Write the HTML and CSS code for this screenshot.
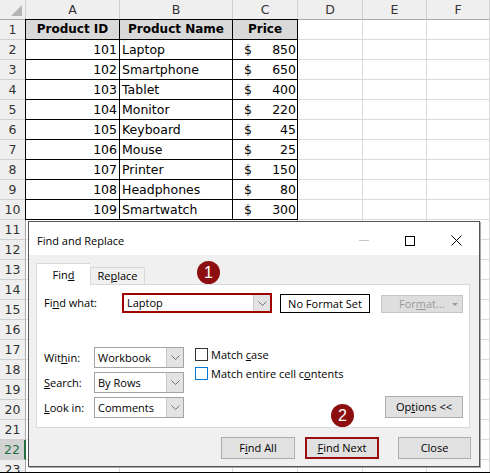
FILE: index.html
```html
<!DOCTYPE html>
<html>
<head>
<meta charset="utf-8">
<title>Find and Replace</title>
<link rel="stylesheet" href="styles.css">
</head>
<body>
<div class="screen">
  <div class="sheet">
    <div class="ch corner"><svg width="26" height="20" viewBox="0 0 26 20"><polygon points="22,5 22,16 11,16" fill="#b4b4b4"/></svg></div>
    <div class="ch">A</div><div class="ch">B</div><div class="ch">C</div><div class="ch">D</div><div class="ch">E</div><div class="ch">F</div>

    <div class="rh">1</div><div class="c tb hd first">Product ID</div><div class="c tb hd">Product Name</div><div class="c tb hd">Price</div><div class="c"></div><div class="c"></div><div class="c"></div>
    <div class="rh">2</div><div class="c tb num first">101</div><div class="c tb txt">Laptop</div><div class="c tb cur"><span>$</span><span>850</span></div><div class="c"></div><div class="c"></div><div class="c"></div>
    <div class="rh">3</div><div class="c tb num first">102</div><div class="c tb txt">Smartphone</div><div class="c tb cur"><span>$</span><span>650</span></div><div class="c"></div><div class="c"></div><div class="c"></div>
    <div class="rh">4</div><div class="c tb num first">103</div><div class="c tb txt">Tablet</div><div class="c tb cur"><span>$</span><span>400</span></div><div class="c"></div><div class="c"></div><div class="c"></div>
    <div class="rh">5</div><div class="c tb num first">104</div><div class="c tb txt">Monitor</div><div class="c tb cur"><span>$</span><span>220</span></div><div class="c"></div><div class="c"></div><div class="c"></div>
    <div class="rh">6</div><div class="c tb num first">105</div><div class="c tb txt">Keyboard</div><div class="c tb cur"><span>$</span><span>45</span></div><div class="c"></div><div class="c"></div><div class="c"></div>
    <div class="rh">7</div><div class="c tb num first">106</div><div class="c tb txt">Mouse</div><div class="c tb cur"><span>$</span><span>25</span></div><div class="c"></div><div class="c"></div><div class="c"></div>
    <div class="rh">8</div><div class="c tb num first">107</div><div class="c tb txt">Printer</div><div class="c tb cur"><span>$</span><span>150</span></div><div class="c"></div><div class="c"></div><div class="c"></div>
    <div class="rh">9</div><div class="c tb num first">108</div><div class="c tb txt">Headphones</div><div class="c tb cur"><span>$</span><span>80</span></div><div class="c"></div><div class="c"></div><div class="c"></div>
    <div class="rh">10</div><div class="c tb num first">109</div><div class="c tb txt">Smartwatch</div><div class="c tb cur"><span>$</span><span>300</span></div><div class="c"></div><div class="c"></div><div class="c"></div>

    <div class="rh">11</div><div class="c"></div><div class="c"></div><div class="c"></div><div class="c"></div><div class="c"></div><div class="c"></div>
    <div class="rh">12</div><div class="c"></div><div class="c"></div><div class="c"></div><div class="c"></div><div class="c"></div><div class="c"></div>
    <div class="rh">13</div><div class="c"></div><div class="c"></div><div class="c"></div><div class="c"></div><div class="c"></div><div class="c"></div>
    <div class="rh">14</div><div class="c"></div><div class="c"></div><div class="c"></div><div class="c"></div><div class="c"></div><div class="c"></div>
    <div class="rh">15</div><div class="c"></div><div class="c"></div><div class="c"></div><div class="c"></div><div class="c"></div><div class="c"></div>
    <div class="rh">16</div><div class="c"></div><div class="c"></div><div class="c"></div><div class="c"></div><div class="c"></div><div class="c"></div>
    <div class="rh">17</div><div class="c"></div><div class="c"></div><div class="c"></div><div class="c"></div><div class="c"></div><div class="c"></div>
    <div class="rh">18</div><div class="c"></div><div class="c"></div><div class="c"></div><div class="c"></div><div class="c"></div><div class="c"></div>
    <div class="rh">19</div><div class="c"></div><div class="c"></div><div class="c"></div><div class="c"></div><div class="c"></div><div class="c"></div>
    <div class="rh">20</div><div class="c"></div><div class="c"></div><div class="c"></div><div class="c"></div><div class="c"></div><div class="c"></div>
    <div class="rh">21</div><div class="c"></div><div class="c"></div><div class="c"></div><div class="c"></div><div class="c"></div><div class="c"></div>
    <div class="rh active">22</div><div class="c"></div><div class="c"></div><div class="c"></div><div class="c"></div><div class="c"></div><div class="c"></div>
    <div class="rh">23</div><div class="c"></div><div class="c"></div><div class="c"></div><div class="c"></div><div class="c"></div><div class="c"></div>
  </div>

  <div class="dialog">
    <div class="titlebar">
      <span class="title">Find and Replace</span>
      <div class="wctl">
        <div class="slot"><span class="min"></span></div>
        <div class="slot"><span class="max"></span></div>
        <div class="slot"><svg width="11" height="11" viewBox="0 0 11 11"><path d="M0.5 0.5 L10.5 10.5 M10.5 0.5 L0.5 10.5" stroke="#000" stroke-width="1" fill="none"/></svg></div>
      </div>
    </div>
    <div class="dbody">
      <div class="tabs">
        <div class="tab active">Fin<u>d</u></div>
        <div class="tab">Re<u>p</u>lace</div>
      </div>
      <div class="panel">
        <div class="findrow">
          <span class="lbl-fw">Fi<u>n</u>d what:</span>
          <div class="combo">
            <span class="val">Laptop</span>
            <span class="arrow"><svg width="9" height="5" viewBox="0 0 9 5"><path d="M0.5 0.5 L4.5 4.5 L8.5 0.5" fill="none" stroke="#707070"/></svg></span>
          </div>
          <div class="nofmt">No Format Set</div>
          <div class="fmtbtn"><span>For<u>m</u>at...</span><span class="tri"></span></div>
        </div>
        <div class="opts">
          <div class="selgrid">
            <span>Wit<u>h</u>in:</span>
            <div class="sel"><span class="val">Workbook</span><span class="arrow"><svg width="9" height="5" viewBox="0 0 9 5"><path d="M0.5 0.5 L4.5 4.5 L8.5 0.5" fill="none" stroke="#707070"/></svg></span></div>
            <span><u>S</u>earch:</span>
            <div class="sel"><span class="val">By Rows</span><span class="arrow"><svg width="9" height="5" viewBox="0 0 9 5"><path d="M0.5 0.5 L4.5 4.5 L8.5 0.5" fill="none" stroke="#707070"/></svg></span></div>
            <span><u>L</u>ook in:</span>
            <div class="sel"><span class="val">Comments</span><span class="arrow"><svg width="9" height="5" viewBox="0 0 9 5"><path d="M0.5 0.5 L4.5 4.5 L8.5 0.5" fill="none" stroke="#707070"/></svg></span></div>
          </div>
          <div class="checks">
            <div class="chk"><span class="box"></span><span>Match <u>c</u>ase</span></div>
            <div class="chk"><span class="box blue"></span><span>Match entire cell c<u>o</u>ntents</span></div>
          </div>
          <div class="optbtn">Op<u>t</u>ions &lt;&lt;</div>
        </div>
      </div>
      <div class="btnrow">
        <div class="btn">F<u>i</u>nd All</div>
        <div class="btn next"><u>F</u>ind Next</div>
        <div class="btn close">Close</div>
      </div>
    </div>
  </div>

  <div class="badge b1">1</div>
  <div class="badge b2">2</div>
</div>
</body>
</html>
```

FILE: styles.css
```css
* {
  box-sizing: border-box;
  margin: 0;
  padding: 0;
}

body {
  margin: 0;
  background: #fff;
}

.screen {
  position: relative;
  width: 490px;
  height: 473px;
  overflow: hidden;
  border-bottom: 1px solid #000;
}

/* ---------- spreadsheet ---------- */
.sheet {
  display: grid;
  grid-template-columns: 26px 94px 113px 65px 65px 64px 63px;
  grid-auto-rows: 20px;
  font-family: "DejaVu Sans", sans-serif;
  font-size: 12.5px;
  color: #000;
}

.ch {
  background: #efefef;
  border-right: 1px solid #d0d0d0;
  border-bottom: 1px solid #a9a9a9;
  text-align: center;
  line-height: 19px;
  color: #333;
}

.corner {
  padding: 0;
}

.corner svg {
  display: block;
}

.rh {
  background: #efefef;
  border-right: 1px solid #a9a9a9;
  border-bottom: 1px solid #d0d0d0;
  text-align: center;
  line-height: 19px;
  color: #333;
}

.rh.active {
  background: #d2d2d2;
  color: #217346;
  border-right: 2px solid #217346;
}

.c {
  border-right: 1px solid #dadada;
  border-bottom: 1px solid #dadada;
  line-height: 19px;
  white-space: nowrap;
  overflow: hidden;
}

.tb {
  border-right-color: #000;
  border-bottom-color: #000;
}

.first {
  box-shadow: -1px 0 0 #000;
}

.hd {
  background: #d9d9d9;
  font-weight: bold;
  font-size: 12px;
  text-align: center;
  box-shadow: 0 -1px 0 #000;
}

.hd.first {
  box-shadow: -1px 0 0 #000, 0 -1px 0 #000, -1px -1px 0 #000;
}

.num {
  text-align: right;
  padding-right: 2px;
}

.txt {
  padding-left: 2px;
}

.cur {
  display: flex;
  justify-content: space-between;
  padding: 0 1px 0 11px;
}

/* ---------- dialog ---------- */
.dialog {
  position: absolute;
  left: 28px;
  top: 221px;
  width: 452px;
  height: 246px;
  background: #f0f0f0;
  border: 1px solid #555;
  box-shadow: 1px 1px 0 #a8a8a8;
  font-family: "Open Sans", sans-serif;
  font-size: 11px;
  color: #000;
  display: flex;
  flex-direction: column;
}

.titlebar {
  height: 33px;
  background: #fff;
  display: flex;
  align-items: center;
  padding: 4px 0 0 8px;
}

.title {
  font-size: 11px;
}

.wctl {
  margin-left: auto;
  display: flex;
  align-items: center;
}

.slot {
  width: 46px;
  height: 20px;
  display: flex;
  align-items: center;
  justify-content: center;
}

.slot svg {
  display: block;
}

.min {
  display: block;
  width: 10px;
  height: 1px;
  background: #c4c4c4;
}

.max {
  display: block;
  width: 10px;
  height: 10px;
  border: 1px solid #000;
}

.dbody {
  flex: 1;
  padding: 8px 9px 0 7px;
  display: flex;
  flex-direction: column;
}

.tabs {
  display: flex;
  align-items: flex-end;
  height: 21px;
}

.tab {
  width: 55px;
  height: 17px;
  border: 1px solid #d9d9d9;
  border-bottom: none;
  text-align: center;
  line-height: 16px;
  background: #f0f0f0;
}

.tab.active {
  width: 54px;
  height: 22px;
  margin-bottom: -1px;
  background: #fff;
  position: relative;
  z-index: 1;
  line-height: 21px;
  border-right: none;
}

.panel {
  height: 144px;
  background: #fff;
  border: 1px solid #d9d9d9;
  padding: 8px 6px 0 7px;
}

.findrow {
  display: flex;
  align-items: flex-start;
  height: 20px;
}

.lbl-fw {
  width: 78px;
  line-height: 20px;
}

.combo {
  width: 150px;
  height: 20px;
  border: 2px solid #a00000;
  background: #fff;
  display: flex;
}

.val {
  padding-left: 3px;
  line-height: 16px;
  white-space: nowrap;
}

.arrow {
  margin-left: auto;
  width: 17px;
  background: #e3e3e3;
  border-left: 1px solid #c8c8c8;
  display: flex;
  align-items: center;
  justify-content: center;
}

.arrow svg {
  display: block;
}

.nofmt {
  margin-left: 8px;
  margin-top: 1px;
  width: 90px;
  height: 19px;
  border: 1px solid #000;
  text-align: center;
  line-height: 17px;
  background: #fff;
}

.fmtbtn {
  margin-left: 11px;
  margin-top: 2px;
  width: 82px;
  height: 18px;
  background: #dedede;
  border: 1px solid #c4c4c4;
  color: #9a9a9a;
  display: flex;
  align-items: center;
  padding-left: 17px;
  line-height: 16px;
}

.tri {
  margin-left: auto;
  margin-right: 4px;
  width: 0;
  height: 0;
  border-left: 3px solid transparent;
  border-right: 3px solid transparent;
  border-top: 3px solid #9a9a9a;
}

.opts {
  display: flex;
  align-items: flex-start;
  margin-top: 34px;
}

.selgrid {
  display: grid;
  grid-template-columns: 50px 90px;
  grid-auto-rows: 21px;
  row-gap: 4px;
  align-items: center;
}

.sel {
  height: 21px;
  border: 1px solid #a3a3a3;
  background: #fff;
  display: flex;
}

.sel .val {
  line-height: 19px;
}

.checks {
  margin-left: 11px;
  padding-top: 1px;
  display: flex;
  flex-direction: column;
  gap: 6px;
}

.chk {
  display: flex;
  align-items: center;
  gap: 3px;
  height: 13px;
  white-space: nowrap;
}

.box {
  width: 13px;
  height: 13px;
  border: 1px solid #333;
  background: #fff;
}

.box.blue {
  border-color: #0078d7;
}

.optbtn {
  margin-left: auto;
  align-self: flex-end;
  width: 78px;
  height: 22px;
  border: 1px solid #adadad;
  background: #e1e1e1;
  text-align: center;
  line-height: 20px;
}

.btnrow {
  display: flex;
  justify-content: flex-end;
  margin-top: 9px;
  margin-right: -1px;
}

.btn {
  width: 74px;
  height: 22px;
  border: 1px solid #adadad;
  background: #e1e1e1;
  text-align: center;
  line-height: 20px;
}

.btn.next {
  margin-left: 10px;
  border: 2px solid #9b0f0f;
  line-height: 18px;
}

.btn.close {
  margin-left: 19px;
  width: 73px;
}

/* ---------- callout badges ---------- */
.badge {
  position: absolute;
  width: 23px;
  height: 23px;
  border-radius: 50%;
  background: #8c0e0e;
  color: #fff;
  font-family: "Liberation Sans", sans-serif;
  font-size: 16px;
  display: flex;
  align-items: center;
  justify-content: center;
}

.b1 {
  left: 197px;
  top: 261px;
}

.b2 {
  left: 331px;
  top: 404px;
}
```
